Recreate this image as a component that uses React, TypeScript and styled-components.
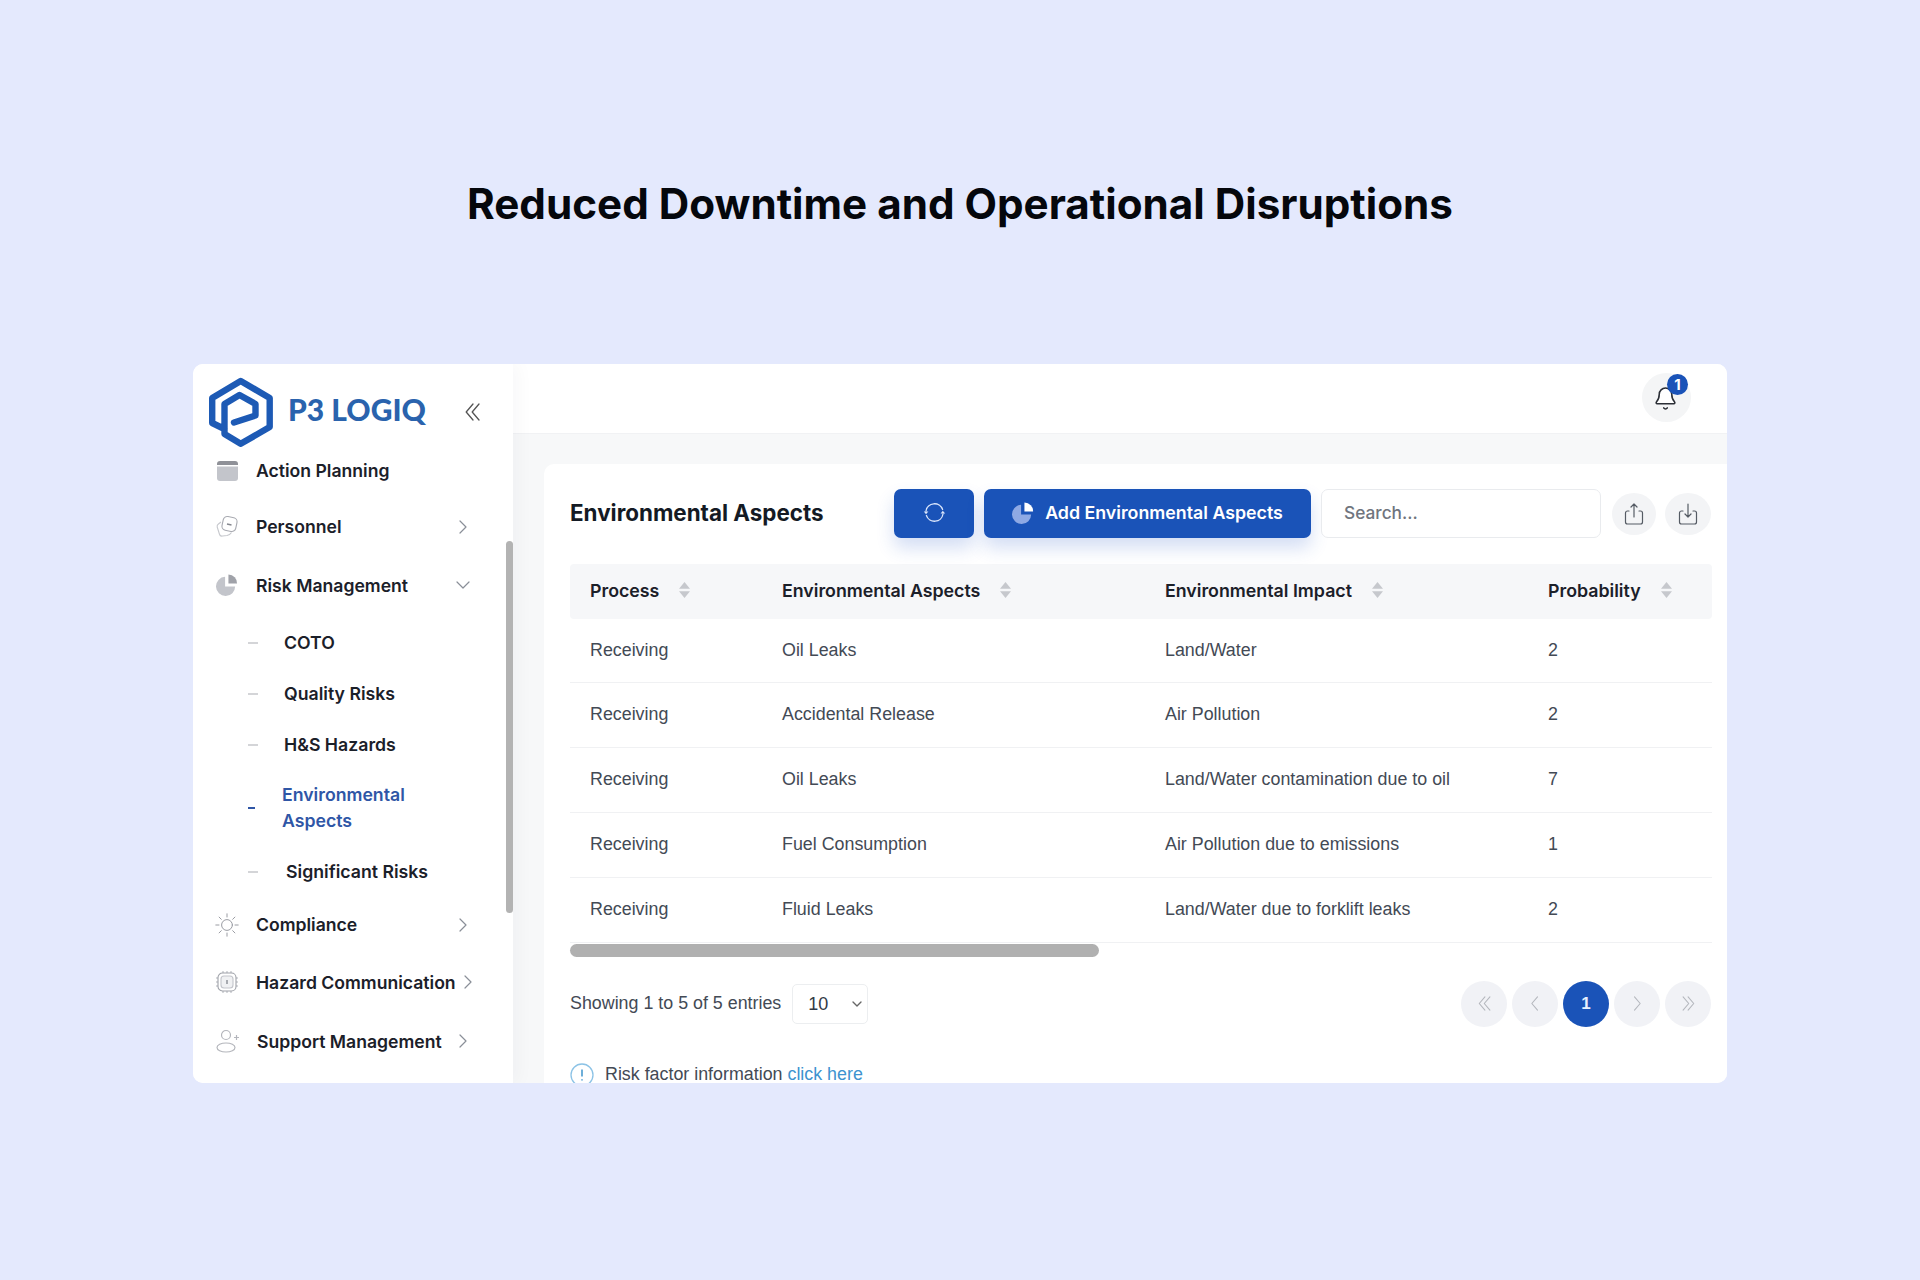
import React from 'react'
import styled, { createGlobalStyle } from 'styled-components'
import { Bell, ChevronDown } from 'lucide-react'

const BLUE = '#1a53b8'

const GlobalStyle = createGlobalStyle`
    html, body {
        margin: 0;
        padding: 0;
        background: #e4e9fd;
    }
    * {
        box-sizing: border-box;
    }
`

const Page = styled.div`
    width: 1920px;
    height: 1280px;
    overflow: hidden;
    padding-top: 178px;
    font-family: Inter, "Liberation Sans", sans-serif;
`

const Headline = styled.h1`
    margin: 0;
    height: 52px;
    font-size: 42.2px;
    line-height: 52px;
    font-weight: 700;
    color: #05070c;
    text-align: center;
`

const Frame = styled.div`
    display: flex;
    width: 1534px;
    height: 719px;
    margin: 134px auto 0;
    background: #fff;
    border-radius: 10px;
    overflow: hidden;
`

const Sidebar = styled.aside`
    position: relative;
    flex: 0 0 320px;
    min-width: 0;
    background: #fff;
    box-shadow: 6px 0 16px rgba(30, 40, 60, 0.03);
    z-index: 1;
`

const ScrollThumb = styled.div`
    position: absolute;
    top: 177px;
    right: 0;
    width: 7px;
    height: 372px;
    border-radius: 4px;
    background: #b3b3b3;
`

const Brand = styled.div`
    display: flex;
    align-items: center;
    height: 80px;
    padding: 15px 0 0 15px;
`

const BrandName = styled.span`
    margin: -5px 0 0 14px;
    font-family: Lato, Inter, sans-serif;
    font-size: 30px;
    font-weight: 900;
    color: #2a63ad;
    white-space: nowrap;
`

const Collapse = styled.span`
    display: flex;
    margin-left: 39px;
    color: #555;
`

const NavRow = styled.div<{ $h?: number }>`
    display: flex;
    align-items: center;
    height: ${p => p.$h ?? 58}px;
    padding: 0 38px 0 21px;
    font-size: 17.6px;
    font-weight: 600;
    color: #1b2029;
`

const NavIcon = styled.span`
    display: flex;
    align-items: center;
    justify-content: center;
    flex: 0 0 26px;
    width: 26px;
    margin-right: 16px;
    color: #c3c5cb;
`

const NavLabel = styled.span<{ $shift?: number }>`
    flex: 1;
    white-space: nowrap;
    margin-left: ${p => p.$shift ?? 0}px;
`

const NavArrow = styled.span`
    display: flex;
    color: #8a8f98;
`

const SubList = styled.div`
    padding-top: 3px;
    margin-bottom: -1px;
`

const SubRow = styled.div<{ $active?: boolean; $h?: number; $x?: number }>`
    display: flex;
    align-items: center;
    height: ${p => p.$h ?? 51}px;
    padding-left: 55px;
    font-size: 17.7px;
    line-height: 26px;
    font-weight: 600;
    color: ${p => (p.$active ? '#2f56a6' : '#1b2029')};

    > span {
        margin-left: ${p => p.$x ?? 26}px;
    }
`

const Dash = styled.i<{ $active?: boolean }>`
    flex: 0 0 auto;
    width: ${p => (p.$active ? 7 : 10)}px;
    height: 2px;
    background: ${p => (p.$active ? '#2f56a6' : '#d4d5d8')};
`

const Main = styled.main`
    flex: 1;
    display: flex;
    flex-direction: column;
    min-width: 0;
    background: #f7f8f9;
`

const Topbar = styled.header`
    display: flex;
    align-items: center;
    justify-content: flex-end;
    flex: 0 0 70px;
    padding-right: 36px;
    background: #fff;
    border-bottom: 1px solid #f1f2f4;
`

const BellWrap = styled.div`
    position: relative;
    display: flex;
    align-items: center;
    justify-content: center;
    width: 49px;
    height: 49px;
    margin-top: -2px;
    border-radius: 50%;
    background: #f4f5f6;
    color: #2b2f36;
`

const BellGlyph = styled(Bell)`
    margin: 1px 3px 0 0;
`

const Badge = styled.span`
    position: absolute;
    top: 1px;
    right: 3px;
    width: 21px;
    height: 21px;
    border-radius: 50%;
    background: ${BLUE};
    color: #fff;
    font-size: 15px;
    line-height: 21px;
    font-weight: 700;
    text-align: center;
`

const Content = styled.div`
    flex: 1;
    padding: 30px 0 0 31px;
    min-height: 0;
`

const Panel = styled.section`
    height: 100%;
    padding: 25px 15px 0 26px;
    background: #fff;
    border-radius: 10px 0 0 0;
`

const Toolbar = styled.div`
    display: flex;
    align-items: center;
    justify-content: space-between;
    height: 49px;
`

const PanelTitle = styled.h2`
    margin: -2px 0 0;
    font-size: 22.4px;
    font-weight: 700;
    color: #141a24;
`

const Actions = styled.div`
    display: flex;
    align-items: center;
    margin-right: 1px;
`

const PrimaryButton = styled.button<{ $w: number }>`
    display: flex;
    align-items: center;
    justify-content: center;
    gap: 11px;
    width: ${p => p.$w}px;
    height: 49px;
    margin-right: 10px;
    padding: 0 0 2px;
    border: 0;
    border-radius: 7px;
    background: ${BLUE};
    color: #fff;
    font-family: inherit;
    font-size: 17.8px;
    font-weight: 600;
    box-shadow: 0 10px 18px rgba(40, 90, 200, 0.2);
`

const SearchInput = styled.input`
    width: 280px;
    height: 49px;
    margin-right: 2px;
    padding: 0 22px 3px;
    border: 1px solid #e9ebee;
    border-radius: 7px;
    font-family: inherit;
    font-size: 17.3px;
    font-weight: 500;
    outline: none;

    &::placeholder {
        color: #70757e;
        opacity: 1;
    }
`

const RoundButton = styled.button<{ $w: number }>`
    display: flex;
    align-items: center;
    justify-content: center;
    width: ${p => p.$w}px;
    height: 42px;
    margin-left: 9px;
    padding: 0;
    border: 0;
    border-radius: 50%;
    background: #f3f4f6;
    color: #555b64;
`

const Table = styled.table`
    width: 1142px;
    margin-top: 26px;
    border-collapse: collapse;
    table-layout: fixed;
    font-family: "Liberation Sans", Arial, sans-serif;
    font-size: 17.85px;
`

const Th = styled.th<{ $w: number }>`
    width: ${p => p.$w}px;
    height: 55px;
    padding: 0 0 3px 20px;
    background: #f6f7f9;
    font-family: Inter, sans-serif;
    font-size: 17.8px;
    font-weight: 600;
    color: #1b2029;
    text-align: left;

    &:first-child {
        border-radius: 4px 0 0 4px;
    }
    &:last-child {
        border-radius: 0 4px 4px 0;
    }
`

const HeadInner = styled.span`
    display: flex;
    align-items: center;
    gap: 20px;
`

const Tr = styled.tr`
    height: 65px;
    border-bottom: 1px solid #f0f1f3;

    &:first-child {
        height: 63px;
    }
`

const Td = styled.td`
    padding: 0 0 0 20px;
    color: #434a55;
    white-space: nowrap;
`

const HScroll = styled.div`
    width: 529px;
    height: 13px;
    margin-top: 1px;
    border-radius: 7px;
    background: #b0b0b0;
`

const Footer = styled.div`
    display: flex;
    align-items: center;
    justify-content: space-between;
    width: 1141px;
    height: 46px;
    margin-top: 24px;
    font-family: "Liberation Sans", Arial, sans-serif;
    font-size: 17.85px;
    color: #434a55;
`

const Entries = styled.div`
    display: flex;
    align-items: center;
    gap: 11px;
`

const SelectBox = styled.div`
    position: relative;
    display: flex;
    width: 76px;
    height: 40px;

    svg {
        position: absolute;
        top: 12px;
        right: 3px;
        color: #666;
        pointer-events: none;
    }
`

const PageSize = styled.select`
    width: 100%;
    height: 100%;
    padding-left: 15px;
    appearance: none;
    border: 1px solid #eceef0;
    border-radius: 5px;
    background: #fff;
    font-family: inherit;
    font-size: 18px;
    color: #333a45;
    outline: none;
`

const Pager = styled.div`
    display: flex;
    gap: 5px;
`

const PageDot = styled.span<{ $active?: boolean }>`
    display: flex;
    align-items: center;
    justify-content: center;
    width: 46px;
    height: 46px;
    border-radius: 50%;
    background: ${p => (p.$active ? BLUE : '#f1f2f6')};
    color: ${p => (p.$active ? '#e6f0ff' : '#b4b7bd')};
    font-size: 17px;
    font-weight: 600;
`

const InfoLine = styled.div`
    display: flex;
    align-items: center;
    gap: 11px;
    margin-top: 36px;
    font-family: "Liberation Sans", Arial, sans-serif;
    font-size: 17.85px;
    color: #434a55;

    a {
        color: #3d93cf;
        text-decoration: none;
    }
`

const LogoMark = () => (
    <svg width="66" height="70" viewBox="0 0 66 70" fill="none" stroke="#1d5ab5" strokeWidth="6.4" strokeLinejoin="round" strokeLinecap="round">
        <path d="M26 45.5 L47.5 38.5 V27 L31.5 18 L16.5 27 V57 L32.7 66.8 L61.7 50 V21 L32.7 4 L4.2 21 V46 L16.5 52" />
    </svg>
)

const CalendarIcon = () => (
    <svg width="21" height="20" viewBox="0 0 21 20" fill="currentColor">
        <path d="M3 0 H18 a3 3 0 0 1 3 3 V4 H0 V3 a3 3 0 0 1 3 -3 Z" fill="#8f9198" />
        <path d="M0 5.5 H21 V17 a3 3 0 0 1 -3 3 H3 a3 3 0 0 1 -3 -3 Z" />
    </svg>
)

const CardsIcon = () => (
    <svg width="23" height="24" viewBox="0 0 23 24" fill="none" stroke="#a8aab1" strokeWidth="1.1" strokeLinejoin="round">
        <path d="M5 7 L2.4 9 Q0.8 10 1.2 12 L3.4 19 Q4 21.5 6.5 21 L11 20.5 Q14 20 15.5 17.5" stroke="#c6c8cd" />
        <rect x="6.5" y="2" width="14" height="14" rx="4" transform="rotate(12 13.5 9)" />
        <path d="M11 9 L15.5 10" stroke="#85878e" strokeWidth="1.4" />
    </svg>
)

const PieIcon = ({ main = 'currentColor', slice = '#a0a2a9' }: { main?: string; slice?: string }) => (
    <svg width="22" height="22" viewBox="0 0 23 23">
        <path d="M9.5 3 V13 H20 A10 10 0 1 1 9.5 3 Z" fill={main} />
        <path d="M13 0.5 A9 9 0 0 1 22 10 H13 Z" fill={slice} />
    </svg>
)

const SunIcon = () => (
    <svg width="24" height="24" viewBox="0 0 24 24" fill="none" stroke="#9a9ca3" strokeWidth="1" strokeLinecap="round">
        <circle cx="12" cy="12" r="5.4" />
        <path d="M12 0.8 V4 M12 20 V23.2 M0.8 12 H4 M20 12 H23.2 M4.1 4.1 L6.3 6.3 M17.7 17.7 L19.9 19.9 M4.1 19.9 L6.3 17.7 M17.7 6.3 L19.9 4.1" />
    </svg>
)

const ChipIcon = () => (
    <svg width="24" height="24" viewBox="0 0 24 24" fill="none" stroke="#9fa2a9" strokeWidth="1.1">
        <rect x="3" y="3" width="18" height="18" rx="4.5" />
        <rect x="6" y="6" width="12" height="12" rx="3" fill="#f0f1f3" stroke="#c3c5cb" />
        <path d="M12 10 V14" strokeWidth="1.8" />
        <path d="M1 8 H3 M1 12 H3 M1 16 H3 M21 8 H23 M21 12 H23 M21 16 H23 M8 1 V3 M12 1 V3 M16 1 V3 M8 21 V23 M12 21 V23 M16 21 V23" strokeWidth="0.8" />
    </svg>
)

const UserPlusIcon = () => (
    <svg width="23" height="24" viewBox="0 0 23 24" fill="none" stroke="#b4b6bc" strokeWidth="1.2">
        <circle cx="10" cy="6" r="4.5" />
        <ellipse cx="10" cy="18.5" rx="9" ry="4.5" />
        <path d="M18 8.5 H23 M20.5 6 V11" />
    </svg>
)

const RefreshIcon = () => (
    <svg width="23" height="23" viewBox="0 0 23 23" fill="none" stroke="#dbe6fb" strokeWidth="1.3" strokeLinecap="round">
        <path d="M3 10 A8.6 8.6 0 0 1 19.6 8.5" />
        <path d="M20 13 A8.6 8.6 0 0 1 3.4 14.5" />
        <path d="M0.8 10.5 H5.4 L3 13.2 Z" fill="#dbe6fb" stroke="none" />
        <path d="M17.6 12.5 H22.2 L19.8 9.8 Z" fill="#dbe6fb" stroke="none" />
    </svg>
)

const ExportIcon = () => (
    <svg width="20" height="24" viewBox="0 0 20 24" fill="none" stroke="currentColor" strokeWidth="1.2" strokeLinecap="round" strokeLinejoin="round">
        <path d="M5 9 H3.5 A2 2 0 0 0 1.5 11 V20 A2 2 0 0 0 3.5 22 H16.5 A2 2 0 0 0 18.5 20 V11 A2 2 0 0 0 16.5 9 H15" />
        <path d="M10 15 V2 M7 5 L10 2 L13 5" />
    </svg>
)

const ImportIcon = () => (
    <svg width="20" height="24" viewBox="0 0 20 24" fill="none" stroke="currentColor" strokeWidth="1.2" strokeLinecap="round" strokeLinejoin="round">
        <path d="M5 9 H3.5 A2 2 0 0 0 1.5 11 V20 A2 2 0 0 0 3.5 22 H16.5 A2 2 0 0 0 18.5 20 V11 A2 2 0 0 0 16.5 9 H15" />
        <path d="M10 2 V15 M7 12 L10 15 L13 12" />
    </svg>
)

const SortIcon = () => (
    <svg width="11" height="16" viewBox="0 0 11 16" fill="#c6c8cd">
        <path d="M5.5 0 L11 6.8 H0 Z" />
        <path d="M5.5 16 L11 9.2 H0 Z" />
    </svg>
)

const InfoIcon = () => (
    <svg width="24" height="24" viewBox="0 0 24 24" fill="none" stroke="#8cc3e6" strokeWidth="1.3">
        <circle cx="12" cy="12" r="11" />
        <path d="M12 6.5 V13.5 M12 16.2 V17.6" stroke="#4a9bd0" strokeWidth="1.6" />
    </svg>
)

// narrow chevrons as drawn in the reference, pointing left unless flipped
const Chevron = ({ right, double, size = 15 }: { right?: boolean; double?: boolean; size?: number }) => (
    <svg width={double ? 15 : 10} height={size} viewBox={double ? '0 0 15 18' : '0 0 10 18'} fill="none" stroke="currentColor" strokeWidth="1.3" strokeLinecap="round" strokeLinejoin="round" transform={right ? 'scale(-1 1)' : undefined}>
        <path d="M8 1 L1.2 9 L8 17" />
        {double && <path d="M14 1 L7.2 9 L14 17" />}
    </svg>
)

const rows = [
    ['Receiving', 'Oil Leaks', 'Land/Water', '2'],
    ['Receiving', 'Accidental Release', 'Air Pollution', '2'],
    ['Receiving', 'Oil Leaks', 'Land/Water contamination due to oil', '7'],
    ['Receiving', 'Fuel Consumption', 'Air Pollution due to emissions', '1'],
    ['Receiving', 'Fluid Leaks', 'Land/Water due to forklift leaks', '2'],
]

const columns = [
    { name: 'Process', w: 192 },
    { name: 'Environmental Aspects', w: 383 },
    { name: 'Environmental Impact', w: 383 },
    { name: 'Probability', w: 184 },
]

const ArrowRight = () => (
    <NavArrow>
        <svg width="24" height="24" viewBox="0 0 24 24" fill="none" stroke="currentColor" strokeWidth="1.2" strokeLinecap="round" strokeLinejoin="round">
            <path d="M9 6 L15 12 L9 18" />
        </svg>
    </NavArrow>
)

export default function App() {
    return (
        <Page>
            <GlobalStyle />
            <Headline>Reduced Downtime and Operational Disruptions</Headline>
            <Frame>
                <Sidebar>
                    <ScrollThumb />
                    <Brand>
                        <LogoMark />
                        <BrandName>P3 LOGIQ</BrandName>
                        <Collapse>
                            <Chevron double size={18} />
                        </Collapse>
                    </Brand>
                    <NavRow $h={53}>
                        <NavIcon><CalendarIcon /></NavIcon>
                        <NavLabel>Action Planning</NavLabel>
                    </NavRow>
                    <NavRow $h={59}>
                        <NavIcon><CardsIcon /></NavIcon>
                        <NavLabel>Personnel</NavLabel>
                        <ArrowRight />
                    </NavRow>
                    <NavRow>
                        <NavIcon><PieIcon /></NavIcon>
                        <NavLabel>Risk Management</NavLabel>
                        <NavArrow><ChevronDown size={24} strokeWidth={1.2} /></NavArrow>
                    </NavRow>
                    <SubList>
                        <SubRow><Dash /><span>COTO</span></SubRow>
                        <SubRow><Dash /><span>Quality Risks</span></SubRow>
                        <SubRow><Dash /><span>H&amp;S Hazards</span></SubRow>
                        <SubRow $active $h={76} $x={27}><Dash $active /><span>Environmental<br />Aspects</span></SubRow>
                        <SubRow $x={28}><Dash /><span>Significant Risks</span></SubRow>
                    </SubList>
                    <NavRow $h={57}>
                        <NavIcon><SunIcon /></NavIcon>
                        <NavLabel>Compliance</NavLabel>
                        <ArrowRight />
                    </NavRow>
                    <NavRow>
                        <NavIcon><ChipIcon /></NavIcon>
                        <NavLabel>Hazard Communication</NavLabel>
                        <ArrowRight />
                    </NavRow>
                    <NavRow $h={60}>
                        <NavIcon><UserPlusIcon /></NavIcon>
                        <NavLabel $shift={1}>Support Management</NavLabel>
                        <ArrowRight />
                    </NavRow>
                </Sidebar>
                <Main>
                    <Topbar>
                        <BellWrap>
                            <BellGlyph size={25} strokeWidth={1.5} fill="#fff" />
                            <Badge>1</Badge>
                        </BellWrap>
                    </Topbar>
                    <Content>
                        <Panel>
                            <Toolbar>
                                <PanelTitle>Environmental Aspects</PanelTitle>
                                <Actions>
                                    <PrimaryButton $w={80}><RefreshIcon /></PrimaryButton>
                                    <PrimaryButton $w={327}>
                                        <PieIcon main="#8ea9e4" slice="#ffffff" />
                                        Add Environmental Aspects
                                    </PrimaryButton>
                                    <SearchInput placeholder="Search..." />
                                    <RoundButton $w={44}><ExportIcon /></RoundButton>
                                    <RoundButton $w={46}><ImportIcon /></RoundButton>
                                </Actions>
                            </Toolbar>
                            <Table>
                                <thead>
                                    <tr>
                                        {columns.map(c => (
                                            <Th key={c.name} $w={c.w}>
                                                <HeadInner>{c.name}<SortIcon /></HeadInner>
                                            </Th>
                                        ))}
                                    </tr>
                                </thead>
                                <tbody>
                                    {rows.map((r, i) => (
                                        <Tr key={i}>
                                            {r.map((cell, j) => <Td key={j}>{cell}</Td>)}
                                        </Tr>
                                    ))}
                                </tbody>
                            </Table>
                            <HScroll />
                            <Footer>
                                <Entries>
                                    Showing 1 to 5 of 5 entries
                                    <SelectBox>
                                        <PageSize defaultValue="10">
                                            <option value="10">10</option>
                                            <option value="25">25</option>
                                            <option value="50">50</option>
                                        </PageSize>
                                        <ChevronDown size={16} strokeWidth={2} />
                                    </SelectBox>
                                </Entries>
                                <Pager>
                                    <PageDot><Chevron double /></PageDot>
                                    <PageDot><Chevron /></PageDot>
                                    <PageDot $active>1</PageDot>
                                    <PageDot><Chevron right /></PageDot>
                                    <PageDot><Chevron right double /></PageDot>
                                </Pager>
                            </Footer>
                            <InfoLine>
                                <InfoIcon />
                                <span>Risk factor information <a href="#info">click here</a></span>
                            </InfoLine>
                        </Panel>
                    </Content>
                </Main>
            </Frame>
        </Page>
    )
}
